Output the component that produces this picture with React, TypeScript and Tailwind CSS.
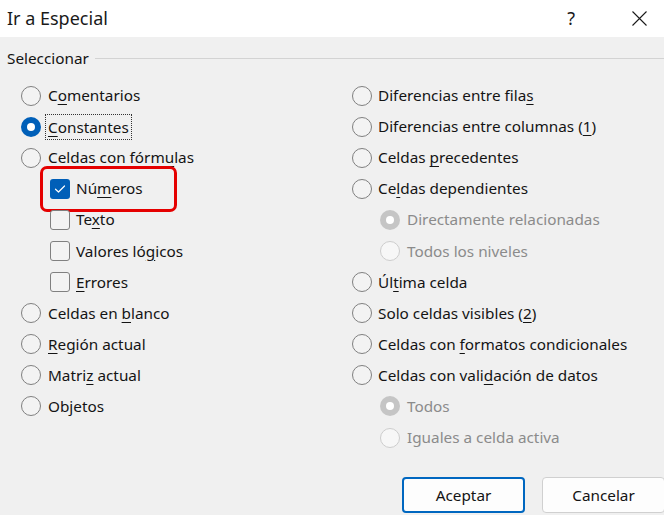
import React from "react";

type Label = { pre: string; u?: string; post?: string };

function Txt({ l, disabled }: { l: Label; disabled?: boolean }) {
  return (
    <span className={disabled ? "text-[#8b8b8b]" : "text-[#141414]"}>
      {l.pre}
      {l.u ? <span className="underline underline-offset-[3px] decoration-1">{l.u}</span> : null}
      {l.post}
    </span>
  );
}

function Radio({ checked, disabled }: { checked?: boolean; disabled?: boolean }) {
  if (checked && !disabled) {
    return (
      <span className="flex h-5 w-5 shrink-0 items-center justify-center rounded-full bg-[#005fb8]">
        <span className="h-2 w-2 rounded-full bg-white" />
      </span>
    );
  }
  if (checked && disabled) {
    return (
      <span className="flex h-5 w-5 shrink-0 items-center justify-center rounded-full bg-[#c5c5c5]">
        <span className="h-2 w-2 rounded-full bg-white" />
      </span>
    );
  }
  if (disabled) {
    return <span className="h-5 w-5 shrink-0 rounded-full border border-[#cdcdcd] bg-[#f7f7f7]" />;
  }
  return <span className="h-5 w-5 shrink-0 rounded-full border border-[#808080] bg-[#f3f3f3]" />;
}

function Check({ checked }: { checked?: boolean }) {
  if (checked) {
    return (
      <span className="flex h-5 w-5 shrink-0 items-center justify-center rounded-[3px] bg-[#005fb8]">
        <svg width="12" height="10" viewBox="0 0 12 10" fill="none">
          <path d="M1.5 5.2 L4.5 8 L10.5 2" stroke="white" strokeWidth="1.2" strokeLinecap="round" strokeLinejoin="round" />
        </svg>
      </span>
    );
  }
  return <span className="h-5 w-5 shrink-0 rounded-[3px] border border-[#808080] bg-[#f3f3f3]" />;
}

function RadioRow({ l, checked, disabled, sub, focus, gap }: { l: Label; checked?: boolean; disabled?: boolean; sub?: boolean; focus?: boolean; gap?: string }) {
  return (
    <div className={"flex h-[31.1px] items-center " + (sub ? "pl-[28px] gap-[7px]" : gap ?? "gap-[7px]")}>
      <Radio checked={checked} disabled={disabled} />
      {focus ? (
        <span className="-ml-[3px] border border-dotted border-[#333] px-[2px] leading-[24px]">
          <Txt l={l} />
        </span>
      ) : (
        <Txt l={l} disabled={disabled} />
      )}
    </div>
  );
}

function CheckRow({ l, checked, highlight }: { l: Label; checked?: boolean; highlight?: boolean }) {
  return (
    <div className="relative flex h-[31.1px] items-center gap-[6px] pl-[29px]">
      {highlight ? (
        <span className="absolute left-[19px] top-[-7px] h-[46px] w-[137px] rounded-[7px] border-[3px] border-[#e50000]" />
      ) : null}
      <Check checked={checked} />
      <Txt l={l} />
    </div>
  );
}

export default function App() {
  return (
    <div
      className="flex h-[515px] w-[664px] flex-col overflow-hidden bg-[#f0f0f0] text-[15.3px]"
      style={{ fontFamily: '"Noto Sans", "Open Sans", sans-serif' }}
    >
      <div className="flex h-[37px] shrink-0 items-center bg-white pl-[7px]">
        <span className="text-[18px] text-[#1a1a1a]">Ir a Especial</span>
        <div className="ml-auto flex items-center">
          <span className="mr-[57px] text-[18px] text-[#1a1a1a]">?</span>
          <svg width="15" height="15" viewBox="0 0 15 15" className="mr-[17px]">
            <path d="M0.5 0.5 L14.5 14.5 M14.5 0.5 L0.5 14.5" stroke="#1a1a1a" strokeWidth="1.1" />
          </svg>
        </div>
      </div>

      <div className="flex h-[43px] items-center pl-[7px]">
        <span className="text-[#141414]">Seleccionar</span>
        <span className="ml-[6px] h-px flex-1 bg-[#d3d3d3]" />
      </div>

      <div className="flex">
        <div className="flex w-[352px] shrink-0 flex-col pl-[21px]">
          <RadioRow l={{ pre: "C", u: "o", post: "mentarios" }} />
          <RadioRow l={{ pre: "", u: "C", post: "onstantes" }} checked focus />
          <RadioRow l={{ pre: "Celdas con fórm", u: "u", post: "las" }} />
          <CheckRow l={{ pre: "Nú", u: "m", post: "eros" }} checked highlight />
          <CheckRow l={{ pre: "Te", u: "x", post: "to" }} />
          <CheckRow l={{ pre: "Valores ló", u: "g", post: "icos" }} />
          <CheckRow l={{ pre: "", u: "E", post: "rrores" }} />
          <RadioRow l={{ pre: "Celdas en ", u: "b", post: "lanco" }} />
          <RadioRow l={{ pre: "", u: "R", post: "egión actual" }} />
          <RadioRow l={{ pre: "Matri", u: "z", post: " actual" }} />
          <RadioRow l={{ pre: "Objetos" }} />
        </div>
        <div className="flex flex-1 flex-col">
          <RadioRow gap="gap-[6px]" l={{ pre: "Diferencias entre fila", u: "s" }} />
          <RadioRow gap="gap-[6px]" l={{ pre: "Diferencias entre columnas (", u: "1", post: ")" }} />
          <RadioRow gap="gap-[6px]" l={{ pre: "Celdas ", u: "p", post: "recedentes" }} />
          <RadioRow gap="gap-[6px]" l={{ pre: "Ce", u: "l", post: "das dependientes" }} />
          <RadioRow sub checked disabled l={{ pre: "Directamente relacionadas" }} />
          <RadioRow sub disabled l={{ pre: "Todos los niveles" }} />
          <RadioRow gap="gap-[6px]" l={{ pre: "Úl", u: "t", post: "ima celda" }} />
          <RadioRow gap="gap-[6px]" l={{ pre: "Solo celdas visibles (", u: "2", post: ")" }} />
          <RadioRow gap="gap-[6px]" l={{ pre: "Celdas con ", u: "f", post: "ormatos condicionales" }} />
          <RadioRow gap="gap-[6px]" l={{ pre: "Celdas con vali", u: "d", post: "ación de datos" }} />
          <RadioRow sub checked disabled l={{ pre: "Todos" }} />
          <RadioRow sub disabled l={{ pre: "Iguales a celda activa" }} />
        </div>
      </div>

      <div className="mt-auto flex gap-[17px] pb-[2px] pl-[402px]">
        <button className="h-[36px] w-[123px] shrink-0 rounded-[4px] border-2 border-[#0067c0] bg-[#fdfdfd] text-[#141414]">
          Aceptar
        </button>
        <button className="h-[36px] w-[123px] shrink-0 rounded-[4px] border border-[#d0d0d0] bg-[#fdfdfd] text-[#141414]">
          Cancelar
        </button>
      </div>
    </div>
  );
}
